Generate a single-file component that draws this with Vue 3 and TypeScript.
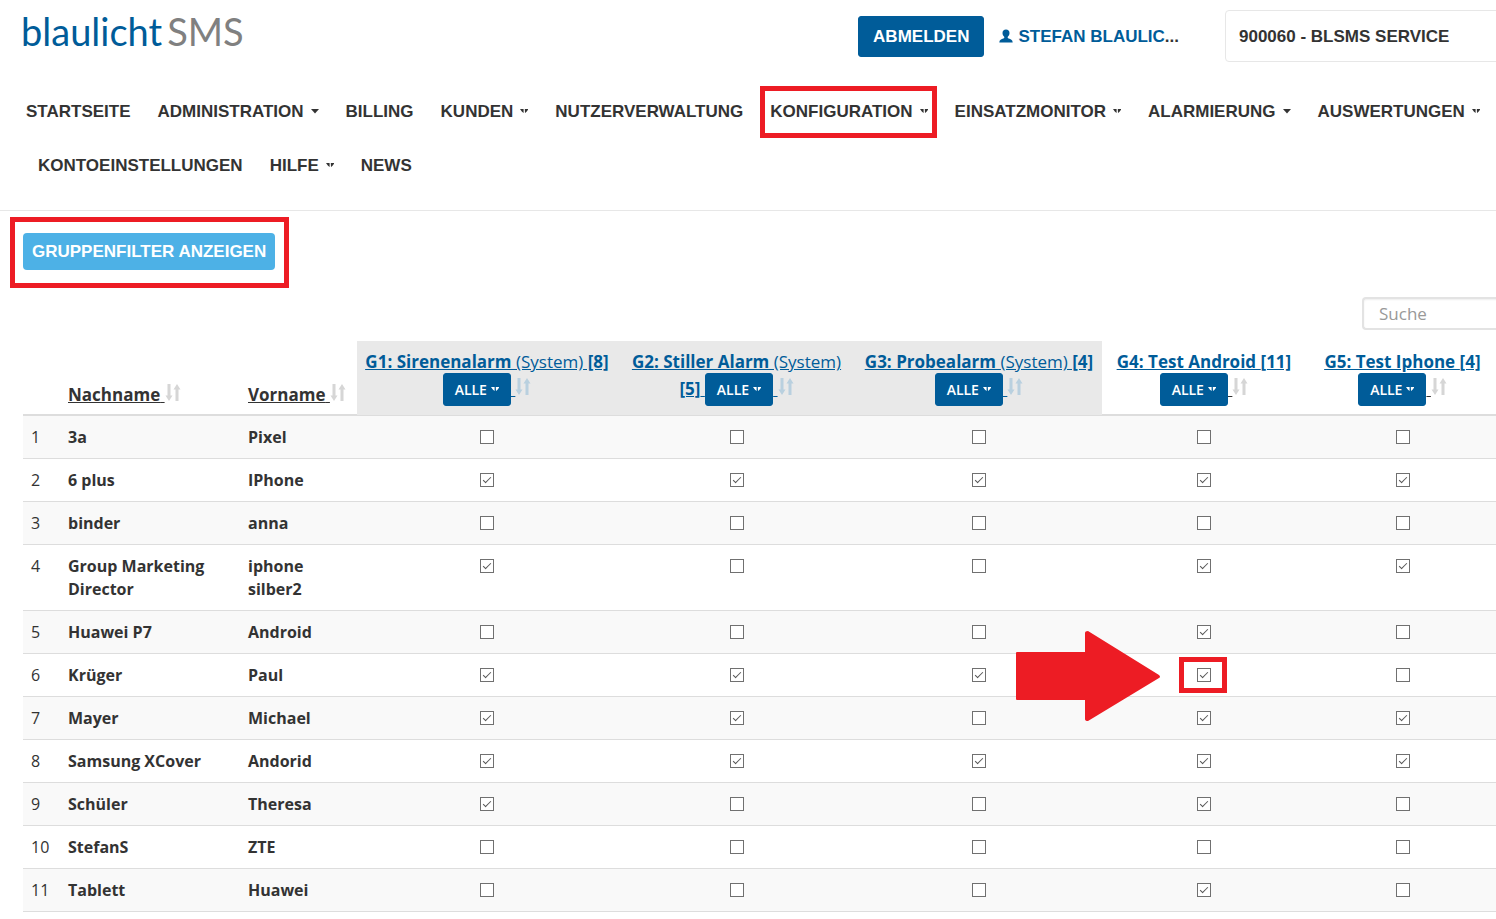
<script setup lang="ts">
import { ref } from 'vue'

interface NavItem {
  label: string
  caret?: 'solid' | 'split'
  marked?: boolean
}

interface Group {
  name: string
  system: boolean
  count: number
  width: string
}

interface Member {
  last: string
  first: string
  groups: boolean[]
}

const firstRow: NavItem[] = [
  { label: 'STARTSEITE' },
  { label: 'ADMINISTRATION', caret: 'solid' },
  { label: 'BILLING' },
  { label: 'KUNDEN', caret: 'split' },
  { label: 'NUTZERVERWALTUNG' },
  { label: 'KONFIGURATION', caret: 'split', marked: true },
  { label: 'EINSATZMONITOR', caret: 'split' },
  { label: 'ALARMIERUNG', caret: 'solid' },
  { label: 'AUSWERTUNGEN', caret: 'split' },
]

const secondRow: NavItem[] = [
  { label: 'KONTOEINSTELLUNGEN' },
  { label: 'HILFE', caret: 'split' },
  { label: 'NEWS' },
]

const navRows = [firstRow, secondRow]

const caretPaths = {
  solid: 'M0 0h8L4 4.500z',
  split: 'M0 0h3.600v4L2 2.800zM4.800 0H8.500L6.500 2.800 5 4z',
}

const sortPath = 'M2.500 0h3v11.500h2L4 17 .5 11.500h2zM10.500 17h3V5.500h2L12 0 8.500 5.500h2z'

const groups: Group[] = [
  { name: 'G1: Sirenenalarm', system: true, count: 8, width: 'w-g1' },
  { name: 'G2: Stiller Alarm', system: true, count: 5, width: 'w-g2' },
  { name: 'G3: Probealarm', system: true, count: 4, width: 'w-g3' },
  { name: 'G4: Test Android', system: false, count: 11, width: 'w-g4' },
  { name: 'G5: Test Iphone', system: false, count: 4, width: 'w-g5' },
]

function member(last: string, first: string, flags: string): Member {
  return { last, first, groups: flags.split('').map((f) => f === 'x') }
}

const members = ref<Member[]>([
  member('3a', 'Pixel', '.....'),
  member('6 plus', 'IPhone', 'xxxxx'),
  member('binder', 'anna', '.....'),
  member('Group Marketing Director', 'iphone silber2', 'x..xx'),
  member('Huawei P7', 'Android', '...x.'),
  member('Krüger', 'Paul', 'xxxx.'),
  member('Mayer', 'Michael', 'xx.xx'),
  member('Samsung XCover', 'Andorid', 'xxxxx'),
  member('Schüler', 'Theresa', 'x..x.'),
  member('StefanS', 'ZTE', '.....'),
  member('Tablett', 'Huawei', '...x.'),
])

const search = ref('')
const account = ref('900060')

function isMarked(row: number, col: number): boolean {
  return row === 5 && col === 3
}
</script>

<template>
  <div class="page">
    <header class="header">
      <div class="topbar">
        <a href="#" class="logo"><span class="logo-main">blaulicht</span><span class="logo-sub">SMS</span></a>
        <button type="button" class="btn logout">ABMELDEN</button>
        <a href="#" class="user">
          <svg class="user-icon" viewBox="0 0 14 14" aria-hidden="true">
            <path d="M7 .5C4.800.5 3.500 1.900 3.500 4c0 1.700.8 2.900 1.700 3.700.3.900 0 1.500-.9 1.900C2.500 10.400.300 11 .300 13.500h13.400c0-2.500-2.200-3.100-4-3.900-.9-.4-1.200-1-.9-1.900.9-.8 1.700-2 1.700-3.700C10.500 1.900 9.200.5 7 .5z" fill="currentColor" />
          </svg>
          <span>STEFAN BLAULIC<span class="dots">...</span></span>
        </a>
        <select v-model="account" class="account" aria-label="Kunde">
          <option value="900060">900060 - BLSMS SERVICE</option>
        </select>
      </div>
      <nav class="nav">
        <ul v-for="(row, r) in navRows" :key="r" class="nav-row">
          <li v-for="item in row" :key="item.label" class="nav-item">
            <a href="#" class="nav-link">
              {{ item.label }}
              <svg v-if="item.caret" class="caret" viewBox="0 0 8 5" aria-hidden="true"><path :d="caretPaths[item.caret]" fill="currentColor" /></svg>
            </a>
            <span v-if="item.marked" class="mark mark-nav"></span>
          </li>
        </ul>
      </nav>
    </header>

    <main class="content">
      <div class="filter">
        <button type="button" class="filter-btn">GRUPPENFILTER ANZEIGEN</button>
        <span class="mark mark-filter"></span>
      </div>
      <div class="search-row">
        <input v-model="search" type="search" class="search" placeholder="Suche" aria-label="Suche" />
      </div>
      <table class="table">
        <colgroup>
          <col class="w-no" />
          <col class="w-last" />
          <col class="w-first" />
          <col v-for="g in groups" :key="g.name" :class="g.width" />
        </colgroup>
        <thead>
          <tr>
            <th></th>
            <th v-for="h in ['Nachname', 'Vorname']" :key="h" class="name">
              <span class="sort"><a href="#">{{ h }}</a>&nbsp;<svg class="sort-icon" viewBox="0 0 16 17" aria-hidden="true"><path :d="sortPath" fill="currentColor" /></svg></span>
            </th>
            <th v-for="g in groups" :key="g.name" class="group" :class="{ system: g.system }">
              <span class="sort"><a href="#">{{ g.name }} <span v-if="g.system" class="light">(System)</span>{{ g.system ? ' ' : '' }}[{{ g.count }}]</a> <button type="button" class="btn all">ALLE<svg class="caret" viewBox="0 0 8 5" aria-hidden="true"><path :d="caretPaths.split" fill="currentColor" /></svg></button>&nbsp;<svg class="sort-icon" viewBox="0 0 16 17" aria-hidden="true"><path :d="sortPath" fill="currentColor" /></svg></span>
            </th>
          </tr>
        </thead>
        <tbody>
          <tr v-for="(m, i) in members" :key="m.last">
            <td class="no">{{ i + 1 }}</td>
            <td class="bold">{{ m.last }}</td>
            <td class="bold">{{ m.first }}</td>
            <td v-for="(g, c) in groups" :key="g.name" class="check-cell">
              <span class="check-wrap">
                <input v-model="m.groups[c]" type="checkbox" class="check" :aria-label="`${m.first} ${m.last}, ${g.name}`" />
                <template v-if="isMarked(i, c)">
                  <span class="mark mark-check"></span>
                  <svg class="arrow" viewBox="0 0 144 90" aria-hidden="true"><path d="M1 21H69V2Q69 0 72 0L143 44Q145 46 143 47L72 90Q69 90 69 88V69H1Q0 69 0 68V22Q0 21 1 21z" fill="#ed1c24" /></svg>
                </template>
              </span>
            </td>
          </tr>
        </tbody>
      </table>
    </main>
  </div>
</template>

<style>
body {
  margin: 0;
  background: #fff;
}
</style>

<style scoped>
.page {
  overflow: hidden;
  color: #333;
  font-family: "Open Sans", "Noto Sans", sans-serif;
  font-size: 16px;
  line-height: 23px;
}

.header {
  border-bottom: 1px solid #e7e7e7;
  padding-bottom: 18px;
  font-family: "Liberation Sans", Arial, sans-serif;
  font-weight: 700;
  font-size: 17px;
}

.topbar {
  display: flex;
  align-items: center;
  height: 52px;
  margin: 0 -4px 0 21px;
  padding-top: 10px;
}

.logo {
  display: flex;
  gap: 5px;
  margin-right: auto;
  padding-bottom: 10px;
  font-family: Lato, sans-serif;
  font-size: 38px;
  font-weight: 400;
  line-height: 46px;
  text-decoration: none;
}

.logo-main {
  color: #005c99;
}

.logo-sub {
  color: #808080;
}

.btn {
  border: 1px solid #005c99;
  border-radius: 3px;
  background: #005c99;
  color: #fff;
  cursor: pointer;
}

.logout {
  height: 41px;
  padding: 0 14px;
  font: inherit;
}

.user {
  display: flex;
  align-items: center;
  gap: 5px;
  margin: 0 46px 0 15px;
  color: #005c99;
  text-decoration: none;
}

.user-icon {
  width: 14px;
  height: 14px;
}

.dots {
  color: #333;
}

.account {
  appearance: none;
  box-sizing: border-box;
  width: 275px;
  height: 52px;
  padding: 0 13px;
  border: 1px solid #e7e7e7;
  border-radius: 4px;
  background: #fff;
  color: #333;
  font: inherit;
}

.nav {
  padding: 22px 0 0 26px;
}

.nav-row {
  display: flex;
  gap: 27px;
  margin: 0;
  padding: 0;
  list-style: none;
}

.nav-row + .nav-row {
  padding-left: 12px;
}

.nav-item {
  position: relative;
}

.nav-link {
  display: flex;
  align-items: center;
  gap: 7px;
  height: 54px;
  color: #333;
  text-decoration: none;
  white-space: nowrap;
}

.caret {
  flex: none;
  width: 8px;
  height: 5px;
}

.mark {
  position: absolute;
  box-sizing: border-box;
  border: 5px solid #ed1c24;
  pointer-events: none;
}

.mark-nav {
  inset: 2px -9px 0 -10px;
}

.content {
  margin: 0 -3px 0 23px;
}

.filter {
  position: relative;
  width: fit-content;
  margin-top: 22px;
}

.filter-btn {
  display: block;
  height: 37px;
  padding: 0 9px;
  border: 0;
  border-radius: 4px;
  background: #4db1e6;
  color: #fff;
  font: 700 17px "Liberation Sans", Arial, sans-serif;
  cursor: pointer;
}

.mark-filter {
  inset: -16px -14px -18px -13px;
}

.search-row {
  display: flex;
  justify-content: flex-end;
  margin: 27px 0 11px;
}

.search {
  box-sizing: border-box;
  width: 137px;
  height: 33px;
  margin: 0;
  padding: 0 15px;
  border: 2px solid #e3e3e3;
  border-right: 0;
  border-radius: 4px 0 0 4px;
  box-shadow: inset 0 1px 2px #eee;
  background: #fff;
  color: #333;
  font: 17px "Open Sans", sans-serif;
}

.search::placeholder {
  color: #999;
}

.table {
  width: 100%;
  table-layout: fixed;
  border-collapse: separate;
  border-spacing: 0;
}

.w-no { width: 37px; }
.w-last { width: 180px; }
.w-first { width: 117px; }
.w-g1 { width: 260px; }
.w-g2 { width: 239px; }
.w-g3 { width: 246px; }
.w-g4 { width: 204px; }
.w-g5 { width: 193px; }

th {
  padding: 9px 8px 8px;
  border-bottom: 2px solid #ddd;
  font-size: 17px;
  font-weight: 700;
  text-align: left;
  vertical-align: bottom;
}

.group {
  padding-right: 6px;
  padding-left: 6px;
  text-align: center;
}

.system {
  border-bottom: 1px solid #ddd;
  padding-bottom: 9px;
  background: #e9e9e9;
}

.sort {
  color: #333;
  text-decoration: underline;
}

.sort a {
  color: inherit;
}

.group .sort a,
.system .sort {
  color: #005c99;
}

.light {
  font-weight: 400;
}

.sort-icon {
  width: 16px;
  height: 17px;
  color: #d6d6d6;
}

.system .sort-icon {
  color: #b9d0df;
}

.all {
  display: inline-flex;
  align-items: center;
  gap: 4px;
  height: 33px;
  padding: 0 11px;
  font: 600 14px "Open Sans", sans-serif;
}

td {
  padding: 10px 8px 9px;
  border-bottom: 1px solid #ddd;
  vertical-align: top;
}

tbody tr:nth-child(odd) td {
  background: #f9f9f9;
}

.bold {
  font-weight: 700;
}

.check-cell {
  text-align: center;
}

.check-wrap {
  display: inline-flex;
  position: relative;
  vertical-align: top;
  margin-top: 4px;
}

.check {
  appearance: none;
  position: relative;
  box-sizing: border-box;
  width: 14px;
  height: 14px;
  margin: 0;
  border: 1px solid #707070;
  background: #fff;
}

.check:checked::after {
  content: "";
  position: absolute;
  left: 4px;
  top: 1px;
  width: 3px;
  height: 7px;
  border: solid #555;
  border-width: 0 1px 1px 0;
  transform: rotate(45deg);
}

.mark-check {
  left: -18px;
  top: -11px;
  width: 48px;
  height: 36px;
}

.arrow {
  position: absolute;
  left: -181px;
  top: -37px;
  width: 144px;
  height: 90px;
  pointer-events: none;
}
</style>
